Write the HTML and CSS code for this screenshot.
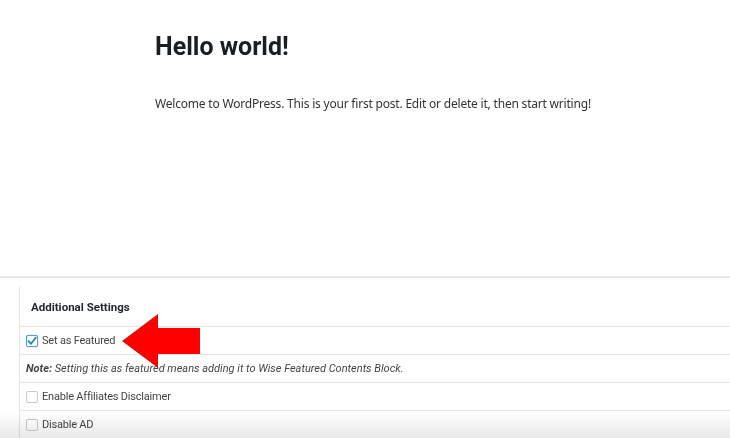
FILE: index.html
```html
<!DOCTYPE html>
<html>
<head>
<meta charset="utf-8">
<link rel="stylesheet" href="styles.css">
</head>
<body>
<div class="page">
  <div class="post">
    <h1 class="post-title">Hello world!</h1>
    <p class="post-body">Welcome to WordPress. This is your first post. Edit or delete it, then start writing!</p>
  </div>
  <div class="divider"></div>
  <div class="metabox">
    <h2 class="metabox-title">Additional Settings</h2>
    <div class="row">
      <span class="cb checked"><svg viewBox="0 0 12 12" width="12" height="12"><path d="M2.5 6.2 L5 8.8 L9.8 2.6" fill="none" stroke="#1e8cbe" stroke-width="1.8" stroke-linecap="round" stroke-linejoin="round"/></svg></span>
      <span class="label">Set as Featured</span>
    </div>
    <div class="row note"><b>Note:</b>&nbsp;Setting this as featured means adding it to Wise Featured Contents Block.</div>
    <div class="row">
      <span class="cb"></span>
      <span class="label">Enable Affiliates Disclaimer</span>
    </div>
    <div class="row last">
      <span class="cb"></span>
      <span class="label">Disable AD</span>
    </div>
  </div>
  <div class="fade"></div>
  <svg class="arrow" width="80" height="56" viewBox="0 0 80 56"><polygon points="0,27 36,0 36,14 78,14 78,40 36,40 36,54" fill="#ff0000"/></svg>
</div>
</body>
</html>
```
FILE: styles.css
```css
html, body {
  margin: 0;
  padding: 0;
  background: #fff;
}
.page {
  position: relative;
  width: 730px;
  height: 438px;
  overflow: hidden;
}
.post {
  height: 276px;
  padding-left: 155px;
  box-sizing: border-box;
  padding-top: 32px;
}
.post-title {
  margin: 0;
  font-family: Roboto, "Liberation Sans", sans-serif;
  font-weight: 700;
  font-size: 25px;
  line-height: 30px;
  color: #191e23;
}
.post-body {
  margin: 32px 0 0;
  font-family: "Noto Sans", "Open Sans", sans-serif;
  font-size: 12px;
  letter-spacing: -0.2px;
  line-height: 20px;
  color: #333;
}
.divider {
  height: 2px;
  background: #e8e8e8;
}
.metabox {
  margin-left: 19px;
  margin-top: 8px;
  border-left: 1px solid #e5e5e5;
}
.metabox-title {
  margin: 0;
  padding: 13px 0 0 11px;
  height: 27px;
  font-family: Roboto, "Liberation Sans", sans-serif;
  font-weight: 700;
  font-size: 11.5px;
  line-height: 16px;
  color: #23282d;
}
.row {
  display: flex;
  align-items: center;
  height: 27px;
  border-top: 1px solid #e5e5e5;
  padding-left: 6px;
  font-family: Roboto, "Liberation Sans", sans-serif;
  font-size: 11px;
  letter-spacing: -0.2px;
  color: #444;
}
.row.last {
  border-bottom: 1px solid #e5e5e5;
}
.cb {
  width: 12px;
  height: 12px;
  box-sizing: border-box;
  border: 1px solid #c5c9cc;
  border-radius: 2px;
  background: #fff;
  margin-right: 4px;
  display: flex;
}
.cb.checked {
  border-color: #5b9dd9;
  box-shadow: 0 0 1px #5b9dd9;
}
.cb svg {
  margin: -1px;
}
.note {
  font-style: italic;
  letter-spacing: 0;
}
.note b {
  font-weight: 700;
}
.fade {
  position: absolute;
  left: 0;
  right: 0;
  bottom: 0;
  height: 26px;
  background: linear-gradient(to bottom, rgba(255,255,255,0), rgba(232,232,232,1));
  mix-blend-mode: multiply;
  pointer-events: none;
}
.arrow {
  position: absolute;
  left: 122px;
  top: 314px;
}
```
